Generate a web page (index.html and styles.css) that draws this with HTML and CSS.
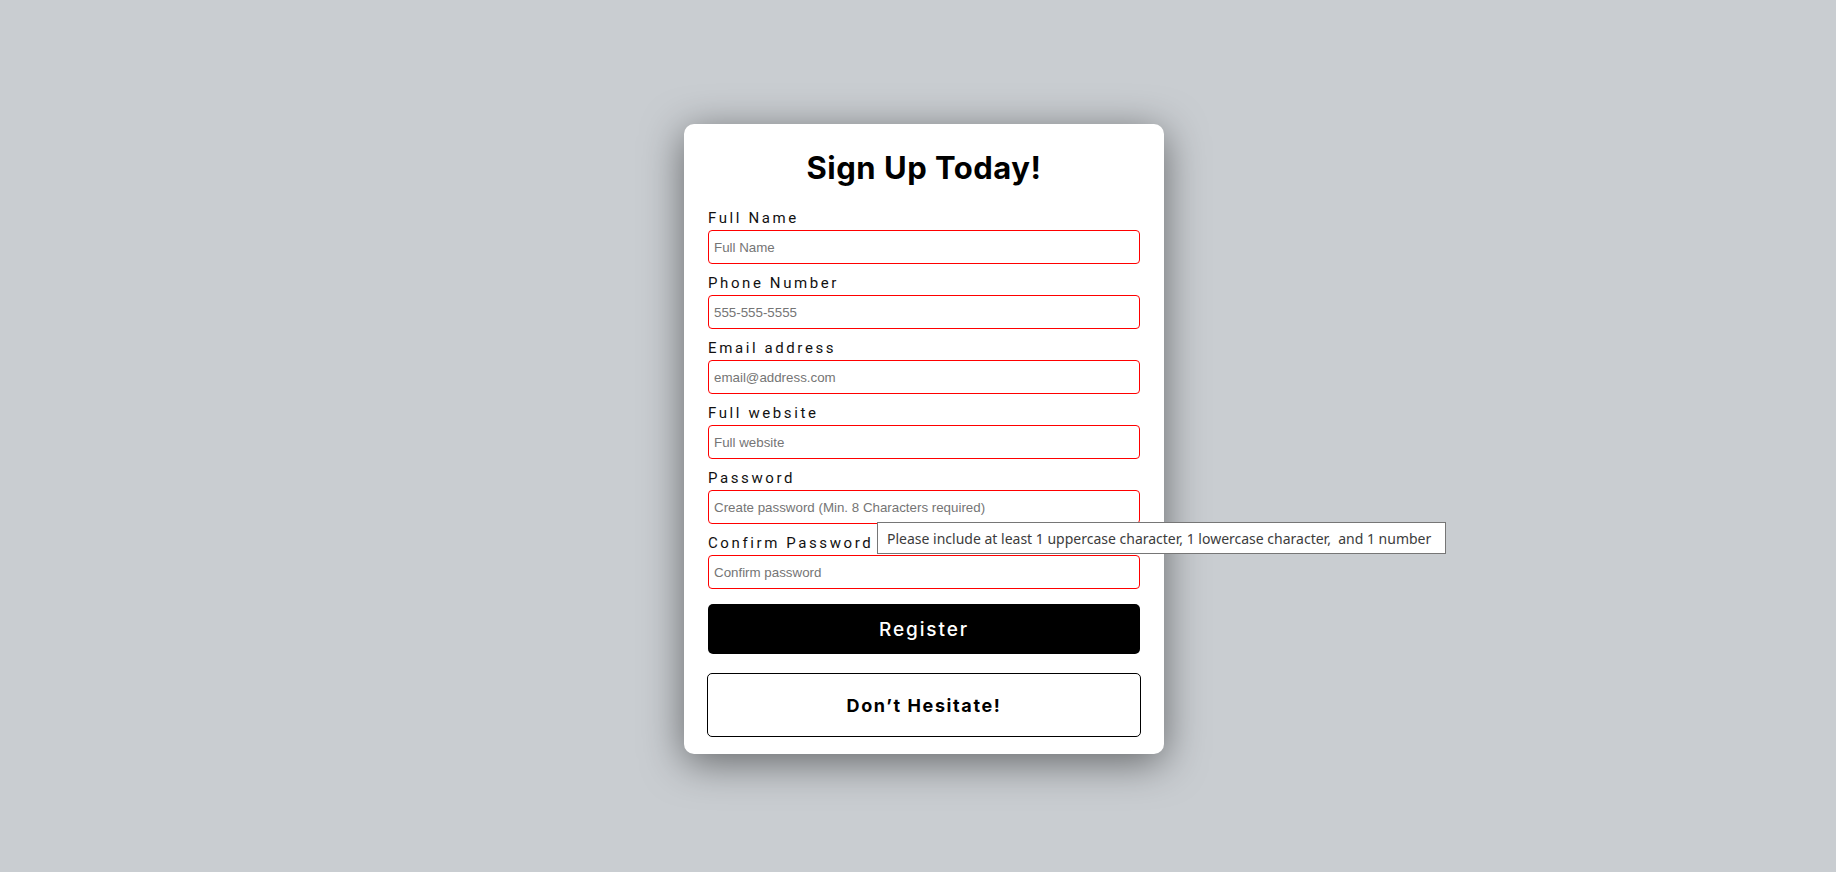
FILE: index.html
```html
<!DOCTYPE html>
<html lang="en">
<head>
<meta charset="utf-8">
<title>Sign Up</title>
<link rel="stylesheet" href="styles.css">
</head>
<body>
<main class="page">
  <form class="card">
    <h1 class="title">Sign Up Today!</h1>
    <div class="field">
      <label class="label">Full Name</label>
      <input class="input" type="text" placeholder="Full Name">
    </div>
    <div class="field">
      <label class="label">Phone Number</label>
      <input class="input" type="text" placeholder="555-555-5555">
    </div>
    <div class="field">
      <label class="label">Email address</label>
      <input class="input" type="text" placeholder="email@address.com">
    </div>
    <div class="field">
      <label class="label">Full website</label>
      <input class="input" type="text" placeholder="Full website">
    </div>
    <div class="field">
      <label class="label">Password</label>
      <input class="input" type="text" placeholder="Create password (Min. 8 Characters required)">
    </div>
    <div class="field">
      <label class="label">Confirm Password</label>
      <input class="input" type="text" placeholder="Confirm password">
    </div>
    <button class="btn-register" type="button">Register</button>
    <div class="hesitate">Don’t Hesitate!</div>
    <div class="tooltip">Please include at least 1 uppercase character, 1 lowercase character,&nbsp; and 1 number</div>
  </form>
</main>
</body>
</html>
```

FILE: styles.css
```css
* { box-sizing: border-box; }
html, body { margin: 0; padding: 0; }
body {
  background: #c9cdd1;
  font-family: "Inter", "Roboto", sans-serif;
  min-height: 100vh;
}
.page {
  display: flex;
  justify-content: center;
  padding-top: 124px;
  padding-left: 12px;
}
.card {
  position: relative;
  width: 480px;
  height: 630px;
  background: #fff;
  border-radius: 10px;
  padding: 0 24px;
  box-shadow: 0 8px 40px rgba(0, 0, 0, 0.5);
  display: flex;
  flex-direction: column;
}
.title {
  margin: 24px 0 20px;
  text-align: center;
  font-family: "Inter", sans-serif;
  font-weight: 700;
  font-size: 31px;
  line-height: 40px;
  letter-spacing: 0.5px;
  color: #000;
}
.field {
  display: flex;
  flex-direction: column;
}
.label {
  font-family: "Roboto", sans-serif;
  font-size: 15px;
  line-height: 20px;
  letter-spacing: 2.6px;
  color: #111;
  height: 31px;
  padding-top: 10px;
  display: flex;
  align-items: flex-end;
  padding-bottom: 2px;
}
.field:first-of-type .label { height: 22px; padding-top: 0; }
.input {
  width: 432px;
  height: 34px;
  border: 1px solid #ff0000;
  border-radius: 4px;
  padding: 0 5px;
  font-family: "Liberation Sans", Arial, sans-serif;
  font-size: 13.333px;
  color: #000;
  background: #fff;
  outline: none;
}
.input::placeholder { color: #757575; }
.btn-register {
  margin-top: 15px;
  width: 432px;
  height: 50px;
  border: none;
  border-radius: 5px;
  background: #000;
  color: #fff;
  font-family: "Inter", sans-serif;
  font-size: 19px;
  font-weight: 500;
  letter-spacing: 1.9px;
}
.hesitate {
  margin-top: 19px;
  margin-left: -1px;
  width: 434px;
  height: 64px;
  border: 1px solid #000;
  border-radius: 5px;
  display: flex;
  align-items: center;
  justify-content: center;
  font-family: "Inter", sans-serif;
  font-weight: 700;
  font-size: 18px;
  letter-spacing: 1.6px;
  color: #000;
}
.tooltip {
  position: absolute;
  left: 193px;
  top: 398px;
  width: 569px;
  height: 32px;
  background: #fff;
  border: 1px solid #767676;
  font-family: "Noto Sans", "Open Sans", sans-serif;
  font-size: 14px;
  color: #3c3c3c;
  display: flex;
  align-items: center;
  padding-left: 9px;
  white-space: nowrap;
}
```
